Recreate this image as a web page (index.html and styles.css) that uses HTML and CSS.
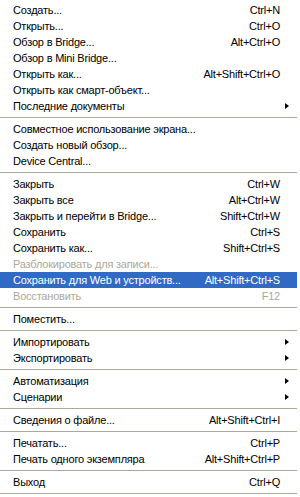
FILE: index.html
```html
<!DOCTYPE html>
<html>
<head>
<meta charset="utf-8">
<link rel="stylesheet" href="styles.css">
</head>
<body>
<div class="menu">
  <div class="item"><span class="label">Создать...</span><span class="key">Ctrl+N</span></div>
  <div class="item"><span class="label">Открыть...</span><span class="key">Ctrl+O</span></div>
  <div class="item"><span class="label">Обзор в Bridge...</span><span class="key">Alt+Ctrl+O</span></div>
  <div class="item"><span class="label">Обзор в Mini Bridge...</span></div>
  <div class="item"><span class="label">Открыть как...</span><span class="key">Alt+Shift+Ctrl+O</span></div>
  <div class="item"><span class="label">Открыть как смарт-объект...</span></div>
  <div class="item sub"><span class="label">Последние документы</span><span class="arrow"></span></div>
  <div class="sep"></div>
  <div class="item"><span class="label">Совместное использование экрана...</span></div>
  <div class="item"><span class="label">Создать новый обзор...</span></div>
  <div class="item"><span class="label">Device Central...</span></div>
  <div class="sep"></div>
  <div class="item"><span class="label">Закрыть</span><span class="key">Ctrl+W</span></div>
  <div class="item"><span class="label">Закрыть все</span><span class="key">Alt+Ctrl+W</span></div>
  <div class="item"><span class="label">Закрыть и перейти в Bridge...</span><span class="key">Shift+Ctrl+W</span></div>
  <div class="item"><span class="label">Сохранить</span><span class="key">Ctrl+S</span></div>
  <div class="item"><span class="label">Сохранить как...</span><span class="key">Shift+Ctrl+S</span></div>
  <div class="item disabled"><span class="label">Разблокировать для записи...</span></div>
  <div class="item active"><span class="label">Сохранить для Web и устройств...</span><span class="key">Alt+Shift+Ctrl+S</span></div>
  <div class="item disabled"><span class="label">Восстановить</span><span class="key">F12</span></div>
  <div class="sep"></div>
  <div class="item"><span class="label">Поместить...</span></div>
  <div class="sep"></div>
  <div class="item sub"><span class="label">Импортировать</span><span class="arrow"></span></div>
  <div class="item sub"><span class="label">Экспортировать</span><span class="arrow"></span></div>
  <div class="sep"></div>
  <div class="item sub"><span class="label">Автоматизация</span><span class="arrow"></span></div>
  <div class="item sub"><span class="label">Сценарии</span><span class="arrow"></span></div>
  <div class="sep"></div>
  <div class="item"><span class="label">Сведения о файле...</span><span class="key">Alt+Shift+Ctrl+I</span></div>
  <div class="sep"></div>
  <div class="item"><span class="label">Печатать...</span><span class="key">Ctrl+P</span></div>
  <div class="item"><span class="label">Печать одного экземпляра</span><span class="key">Alt+Shift+Ctrl+P</span></div>
  <div class="sep"></div>
  <div class="item"><span class="label">Выход</span><span class="key">Ctrl+Q</span></div>
  <div class="bottom"></div>
</div>
</body>
</html>
```

FILE: styles.css
```css
html, body {
  margin: 0;
  padding: 0;
  background: #ffffff;
}

.menu {
  width: 300px;
  height: 497px;
  box-sizing: border-box;
  padding-top: 2px;
  background: #ffffff;
  font-family: "Liberation Sans", Arial, sans-serif;
  font-size: 11px;
  letter-spacing: -0.2px;
  color: #000000;
  overflow: hidden;
}

.item {
  height: 16px;
  display: flex;
  align-items: center;
  justify-content: space-between;
  padding: 0 17px 0 13px;
  margin: 0 3px 0 0;
  white-space: nowrap;
}

.item.sub {
  padding-right: 8px;
}

.key {
  text-align: right;
}

.item.disabled {
  color: #aca899;
}

.item.active {
  background: #316ac5;
  color: #ffffff;
}

.arrow {
  width: 0;
  height: 0;
  border-top: 3.5px solid transparent;
  border-bottom: 3.5px solid transparent;
  border-left: 4px solid #000000;
}

.sep {
  height: 7px;
  display: flex;
  align-items: center;
  margin-right: 3px;
}

.sep::before {
  content: "";
  display: block;
  width: 100%;
  height: 1px;
  background: #aca899;
}

.bottom {
  height: 3px;
  border-bottom: 1px solid #aca899;
  margin-right: 3px;
}
```
